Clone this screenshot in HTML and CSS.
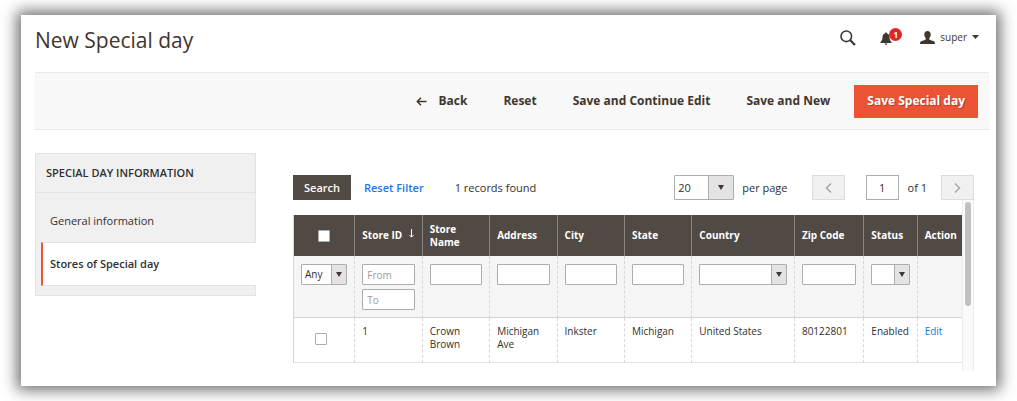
FILE: index.html
```html
<!DOCTYPE html>
<html lang="en">
<head>
<meta charset="utf-8">
<title>New Special day</title>
<link rel="stylesheet" href="styles.css">
</head>
<body>
<div class="window">
  <header class="page-header">
    <h1 class="page-title">New Special day</h1>
    <div class="header-tools">
      <button class="icon-button" type="button" aria-label="Search">
        <svg class="icon-search" width="16" height="16" viewBox="0 0 16 16"><circle cx="6.3" cy="6.3" r="5.300" fill="none" stroke="#41362f" stroke-width="1.6"/><path d="M10 10l5 5" stroke="#41362f" stroke-width="2.2"/></svg>
      </button>
      <button class="icon-button notifications" type="button" aria-label="Notifications">
        <svg width="12" height="13" viewBox="0 0 12 13"><path fill="#41362f" d="M6 0.5c.7 0 1.1.4 1.1 1 1.700.5 2.400 2 2.400 3.800 0 2.300.7 3.600 2 4.700v1H.5v-1c1.300-1.100 2-2.400 2-4.700 0-1.800.7-3.300 2.400-3.800 0-.6.4-1 1.100-1zM4.600 11.500h2.800c-.1.900-.6 1.300-1.400 1.300s-1.300-.4-1.400-1.300z"/></svg>
        <span class="badge">1</span>
      </button>
      <button class="icon-button account" type="button">
        <svg width="15" height="13" viewBox="0 0 15 13"><path fill="#41362f" d="M7.500 0c2 0 3.200 1.300 3.200 3.300 0 1.600-.5 2.900-1.400 3.800v1.300c.6.700 4 1.100 5 2.200.5.600.7 1.400.7 2.400H0c0-1 .2-1.800.7-2.400 1-1.100 4.400-1.500 5-2.200V7.100c-.9-.9-1.400-2.200-1.400-3.800C4.300 1.300 5.500 0 7.500 0z"/></svg>
        <span>super</span>
        <svg class="caret" width="7" height="4" viewBox="0 0 7 4"><path fill="#41362f" d="M0 0h7L3.500 4z"/></svg>
      </button>
    </div>
  </header>

  <div class="actions">
    <button class="action" type="button"><svg class="back-arrow" width="11" height="9" viewBox="0 0 11 9"><path d="M10.500 4.500H1.500M5 .8L1.300 4.500 5 8.200" fill="none" stroke="#41362f" stroke-width="1.500"/></svg>Back</button>
    <button class="action" type="button">Reset</button>
    <button class="action" type="button">Save and Continue Edit</button>
    <button class="action" type="button">Save and New</button>
    <button class="action primary" type="button">Save Special day</button>
  </div>

  <div class="columns">
    <nav class="side">
      <h2 class="side-title">Special day information</h2>
      <ul class="tabs">
        <li><a class="tab" href="#general">General information</a></li>
        <li><a class="tab active" href="#stores">Stores of Special day</a></li>
      </ul>
    </nav>

    <main class="main">
      <div class="grid-bar">
        <button class="search" type="button">Search</button>
        <button class="reset" type="button">Reset Filter</button>
        <span class="found">1 records found</span>
        <div class="pager">
          <span class="select large"><select id="limit"><option>20</option></select></span>
          <label class="per-page" for="limit">per page</label>
          <button class="step" type="button" aria-label="Previous page"><svg width="7" height="10" viewBox="0 0 7 10"><path d="M6 .5L1.500 5 6 9.500" fill="none" stroke="#a3a3a3" stroke-width="1.400"/></svg></button>
          <input class="page-number" id="page" type="text" value="1">
          <label class="of" for="page">of 1</label>
          <button class="step" type="button" aria-label="Next page"><svg width="7" height="10" viewBox="0 0 7 10"><path d="M1 .5L5.500 5 1 9.500" fill="none" stroke="#a3a3a3" stroke-width="1.400"/></svg></button>
        </div>
      </div>

      <div class="grid-scroll">
        <table class="grid">
          <colgroup>
            <col class="c-check"><col class="c-field"><col class="c-field"><col class="c-field"><col class="c-field"><col class="c-field"><col class="c-country"><col class="c-zip"><col class="c-status"><col class="c-action">
          </colgroup>
          <thead>
            <tr class="titles">
              <th class="check"><input class="box" type="checkbox" aria-label="Select all"></th>
              <th><span class="sorted">Store ID <svg width="7" height="9" viewBox="0 0 7 9"><path d="M3.500 0v8M1.500 6l2 2.200L5.500 6" fill="none" stroke="#fff" stroke-width="1"/></svg></span></th>
              <th>Store Name</th>
              <th>Address</th>
              <th>City</th>
              <th>State</th>
              <th>Country</th>
              <th>Zip Code</th>
              <th>Status</th>
              <th>Action</th>
            </tr>
            <tr class="filters">
              <td><span class="select"><select aria-label="Selected"><option>Any</option></select></span></td>
              <td><input class="field" type="text" placeholder="From" aria-label="Store ID from"><input class="field" type="text" placeholder="To" aria-label="Store ID to"></td>
              <td><input class="field" type="text" aria-label="Store name"></td>
              <td><input class="field" type="text" aria-label="Address"></td>
              <td><input class="field" type="text" aria-label="City"></td>
              <td><input class="field" type="text" aria-label="State"></td>
              <td><span class="select"><select aria-label="Country"><option></option></select></span></td>
              <td><input class="field" type="text" aria-label="Zip code"></td>
              <td><span class="select"><select aria-label="Status"><option></option></select></span></td>
              <td></td>
            </tr>
          </thead>
          <tbody>
            <tr class="record">
              <td class="check"><input class="box" type="checkbox" aria-label="Select store 1"></td>
              <td>1</td>
              <td>Crown Brown</td>
              <td>Michigan Ave</td>
              <td>Inkster</td>
              <td>Michigan</td>
              <td>United States</td>
              <td>80122801</td>
              <td>Enabled</td>
              <td><a class="edit" href="#edit">Edit</a></td>
            </tr>
          </tbody>
        </table>
        <div class="scrollbar"><div class="thumb"></div></div>
      </div>
    </main>
  </div>
</div>
</body>
</html>
```
FILE: styles.css
```css
* { box-sizing: border-box; }
html { background: #fff; }
body {
  margin: 0;
  padding: 15px 21px;
  font-family: "Open Sans", "Noto Sans", sans-serif;
  font-size: 11px;
  line-height: 16px;
  color: #303030;
}
button, input, select { font: inherit; color: inherit; margin: 0; }
button { border: 0; padding: 0; background: none; }
svg { display: block; flex: none; }

.window {
  position: relative;
  padding: 0 7px 15px 14px;
  background: #fff;
  box-shadow: 0 0 14px 4px #6e6e6e;
}

.page-header {
  display: flex;
  justify-content: space-between;
  height: 57px;
  padding: 10px 10px 0 0;
}
.page-title {
  margin: 0;
  font-size: 21px;
  font-weight: 400;
  line-height: 30px;
  color: #41362f;
}
.header-tools { display: flex; align-items: center; height: 24px; }
.icon-button { display: flex; align-items: center; }
.icon-search { margin-top: 2px; }
.notifications { position: relative; margin: 3px 28px 0 24px; }
.badge {
  position: absolute;
  top: -4px;
  left: 9px;
  width: 13px;
  height: 13px;
  border-radius: 50%;
  background: #e22626;
  color: #fff;
  font-size: 8px;
  font-weight: 700;
  line-height: 13px;
  text-align: center;
}
.account { gap: 5px; font-size: 10px; color: #41362f; }

.actions {
  display: flex;
  align-items: center;
  justify-content: flex-end;
  gap: 36px;
  height: 58px;
  padding-right: 11px;
  border: solid #e9e9e9;
  border-width: 1px 0;
  background: #f8f8f8;
}
.action {
  display: flex;
  align-items: center;
  font-size: 12px;
  font-weight: 700;
  color: #41362f;
}
.back-arrow { margin-right: 11px; }
.primary {
  height: 33px;
  margin-left: -12px;
  padding: 0 13px;
  background: #eb5334;
  color: #fff;
  text-shadow: 1px 1px 0 rgba(0, 0, 0, .25);
}

.columns {
  display: grid;
  grid-template-columns: 221px minmax(0, 1fr);
  gap: 37px;
  padding: 23px 15px 0 0;
  align-items: start;
}
.side {
  padding-bottom: 9px;
  border: 1px solid #e3e3e3;
  border-right: 0;
  background: linear-gradient(#e3e3e3, #e3e3e3) right / 1px 100% no-repeat #f0f0f0;
}
.side-title {
  margin: 0;
  padding: 11px 10px;
  border-bottom: 1px solid #e3e3e3;
  font-size: 11px;
  font-weight: 600;
  line-height: 16px;
  text-transform: uppercase;
}
.tabs { margin: 0; padding: 7px 0 0 5px; list-style: none; }
.tab {
  display: block;
  padding: 13px 9px;
  color: #303030;
  text-decoration: none;
}
.active {
  border: solid #e3e3e3;
  border-width: 1px 0;
  border-left: 2px solid #eb5334;
  padding-left: 7px;
  background: #fff;
  font-weight: 600;
}

.main { padding-top: 22px; }
.grid-bar { display: flex; align-items: center; height: 25px; }
.search {
  height: 25px;
  padding: 0 11px;
  background: #514943;
  color: #fff;
  font-weight: 600;
}
.reset { margin-left: 13px; color: #1979e0; font-weight: 600; }
.found { margin-left: 31px; }
.pager { display: flex; align-items: center; margin-left: auto; }
.per-page { margin: 0 24px 0 8px; }
.step {
  display: flex;
  align-items: center;
  justify-content: center;
  width: 33px;
  height: 25px;
  border: 1px solid #dcdcdc;
  background: #f0f0f0;
}
.page-number {
  width: 33px;
  height: 25px;
  margin: 0 9px 0 21px;
  padding: 0;
  border: 1px solid #adadad;
  text-align: center;
}
.of { margin-right: 14px; }

.select { position: relative; display: block; height: 21px; }
.select select {
  display: block;
  width: 100%;
  height: 100%;
  padding: 0 0 0 3px;
  border: 1px solid #adadad;
  border-radius: 1px;
  appearance: none;
  background: linear-gradient(90deg, #adadad 1px, #e3e3e3 1px) right / 15px 100% no-repeat #fff;
}
.select::after {
  content: "";
  position: absolute;
  top: 8px;
  right: 5px;
  border: solid transparent;
  border-width: 5px 3px 0;
  border-top-color: #41362f;
  pointer-events: none;
}
.large { width: 60px; height: 25px; }
.large select { background-size: 25px 100%; }
.large::after { top: 10px; right: 10px; }

.grid-scroll { display: flex; }
.grid {
  flex: 1;
  width: 100%;
  margin: 15px 0 8px;
  table-layout: fixed;
  border-collapse: separate;
  border-spacing: 0;
  border-left: 1px solid #d6d6d6;
  font-size: 10px;
  line-height: 13px;
}
.c-check { width: 61px; }
.c-field { width: 67px; }
.c-country { width: 102px; }
.c-zip { width: 69px; }
.c-status { width: 53px; }
.c-action { width: 44px; }
.grid th, .grid td { padding: 0 7px; text-align: left; }
.titles th {
  height: 41px;
  border-right: 1px solid #8a837f;
  background: #514943;
  color: #fff;
  font-weight: 700;
}
.titles th:last-child { border-right: 0; padding-right: 0; }
.sorted { display: flex; justify-content: space-between; }
.filters td {
  height: 62px;
  padding: 8px 7px 0;
  border-right: 1px dashed #d6d6d6;
  border-bottom: 1px solid #d6d6d6;
  background: #f5f5f5;
  vertical-align: top;
}
.record td {
  height: 45px;
  padding-top: 7px;
  border-right: 1px dashed #d6d6d6;
  border-bottom: 1px solid #e3e3e3;
  vertical-align: top;
}
.filters td:last-child, .record td:last-child { border-right: 0; }
.field {
  display: block;
  width: 100%;
  height: 21px;
  padding: 0 4px;
  border: 1px solid #adadad;
  border-radius: 1px;
  background: #fff;
}
.field + .field { margin-top: 4px; }
.field::placeholder { color: #999; opacity: 1; }
.box {
  display: block;
  width: 12px;
  height: 12px;
  margin: 0 auto;
  border: 1px solid #adadad;
  border-radius: 1px;
  appearance: none;
  background: #fff;
}
.grid .record .check { padding: 15px 13px 0 7px; }
.edit { color: #1979e0; text-decoration: none; }

.scrollbar {
  width: 12px;
  padding: 2px;
  border: solid #ececec;
  border-width: 0 1px;
  background: #fafafa;
}
.thumb { width: 6px; height: 62%; margin: 0 auto; border-radius: 3px; background: #c1c1c1; }
```
